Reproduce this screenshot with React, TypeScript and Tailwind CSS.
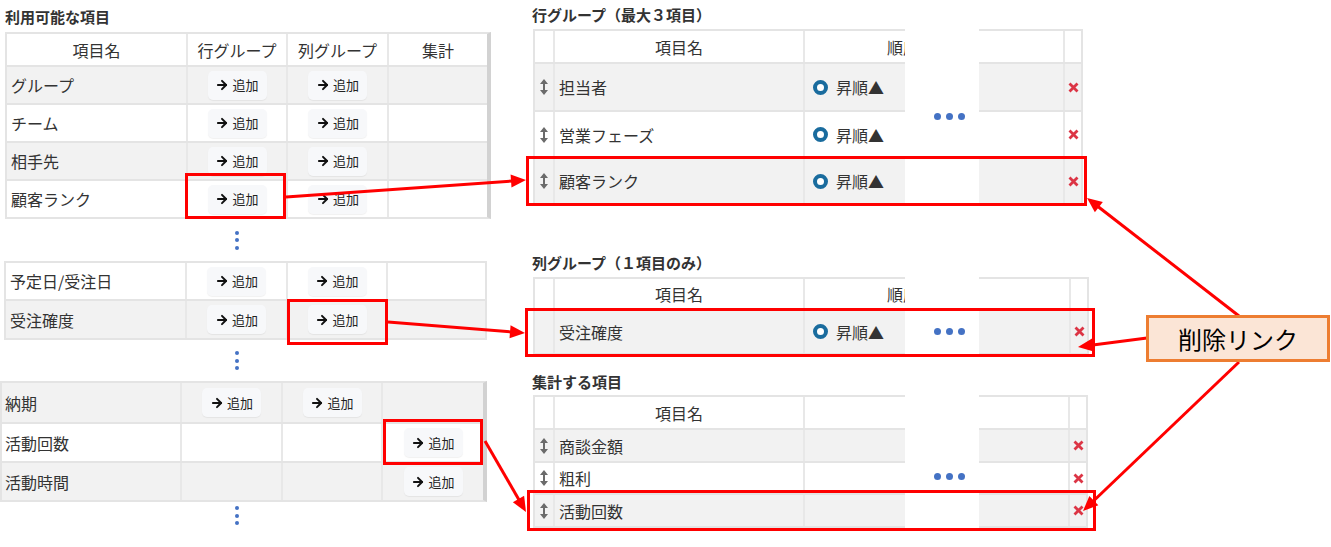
import { ArrowRight } from 'lucide-react';

type LeftRow = { name: string; cells: [boolean, boolean, boolean]; grey: boolean };
type RightRow = { name: string; grey: boolean };

const table1: LeftRow[] = [
  { name: 'グループ', cells: [true, true, false], grey: true },
  { name: 'チーム', cells: [true, true, false], grey: false },
  { name: '相手先', cells: [true, true, false], grey: true },
  { name: '顧客ランク', cells: [true, true, false], grey: false },
];

const table2: LeftRow[] = [
  { name: '予定日/受注日', cells: [true, true, false], grey: false },
  { name: '受注確度', cells: [true, true, false], grey: true },
];

const table3: LeftRow[] = [
  { name: '納期', cells: [true, true, false], grey: true },
  { name: '活動回数', cells: [false, false, true], grey: false },
  { name: '活動時間', cells: [false, false, true], grey: true },
];

function AddButton() {
  return (
    <span className="inline-flex items-center justify-center gap-[3px] w-[59px] h-[29px] rounded-[5px] bg-[#f7f8fa] text-[13px] text-[#222] shadow-[0_1px_1px_rgba(0,0,0,0.06)]">
      <ArrowRight size={14} strokeWidth={3.4} color="#111" />
      追加
    </span>
  );
}

function VDots({ h }: { h: string }) {
  return (
    <div className={`${h} flex items-center pl-[235px]`}>
      <div className="flex flex-col gap-[3.5px]">
        <span className="w-[4px] h-[4px] rounded-full bg-[#4472c4]" />
        <span className="w-[4px] h-[4px] rounded-full bg-[#4472c4]" />
        <span className="w-[4px] h-[4px] rounded-full bg-[#4472c4]" />
      </div>
    </div>
  );
}

function LeftTable({
  rows,
  gridCols,
  className,
  header,
  heights,
  textPad,
}: {
  rows: LeftRow[];
  gridCols: string;
  className: string;
  header: boolean;
  heights: string[];
  textPad: string;
}) {
  return (
    <div className={`border-2 border-[#e4e4e4] ${className}`}>
      {header && (
        <div className={`grid ${gridCols} h-[31px] bg-white`}>
          {['項目名', '行グループ', '列グループ', '集計'].map((h, i) => (
            <div
              key={h}
              className={`flex items-center justify-center ${i ? 'border-l-2 border-[#e8e8e8]' : ''}`}
            >
              {h}
            </div>
          ))}
        </div>
      )}
      {rows.map((r, i) => (
        <div
          key={r.name}
          className={`grid ${gridCols} ${heights[i]} ${r.grey ? 'bg-[#f2f2f2]' : 'bg-white'} ${
            i > 0 || header ? 'border-t-2 border-[#e4e4e4]' : ''
          }`}
        >
          <div className={`flex items-center ${textPad}`}>{r.name}</div>
          {r.cells.map((c, j) => (
            <div key={j} className="flex items-center justify-center border-l-2 border-[#e8e8e8]">
              {c && <AddButton />}
            </div>
          ))}
        </div>
      ))}
    </div>
  );
}

function DragIcon() {
  return (
    <svg width="8" height="16" viewBox="0 0 8 16" fill="#6b6b6b">
      <path d="M4 0 L8 5 H5 V11 H8 L4 16 L0 11 H3 V5 H0 Z" />
    </svg>
  );
}

function DeleteIcon() {
  return (
    <svg width="11" height="11" viewBox="0 0 11 11">
      <path d="M1.5 1.5 L9.5 9.5 M9.5 1.5 L1.5 9.5" stroke="#dc3545" strokeWidth="2.8" />
    </svg>
  );
}

function Order() {
  return (
    <div className="flex items-center gap-[8px] pl-[8px]">
      <span className="w-[15px] h-[15px] rounded-full border-[4px] border-[#1a6c9e] bg-white" />
      <span>昇順▲</span>
    </div>
  );
}

function RightTable({
  gridCols,
  headerH,
  rows,
  heights,
  order,
  drag,
  dotsPad,
}: {
  gridCols: string;
  headerH: string;
  rows: RightRow[];
  heights: string[];
  order: boolean;
  drag: boolean;
  dotsPad: string;
}) {
  return (
    <div className="relative w-fit">
      <div className="border-2 border-[#e4e4e4]">
        <div className={`grid ${gridCols} ${headerH} bg-white`}>
          <div />
          <div className="flex items-center justify-center border-l-2 border-[#e8e8e8]">項目名</div>
          <div className="flex items-center pl-[82px] border-l-2 border-[#e8e8e8]">{order ? '順序' : ''}</div>
          <div className="border-l-2 border-[#e8e8e8]" />
        </div>
        {rows.map((r, i) => (
          <div
            key={r.name}
            className={`grid ${gridCols} ${heights[i]} border-t-2 border-[#e4e4e4] ${r.grey ? 'bg-[#f2f2f2]' : 'bg-white'}`}
          >
            <div className="flex items-center justify-center">{drag && <DragIcon />}</div>
            <div className="flex items-center pl-[4px] border-l-2 border-[#e8e8e8]">{r.name}</div>
            <div className="flex items-center border-l-2 border-[#e8e8e8]">{order && <Order />}</div>
            <div className="flex items-center justify-center border-l-2 border-[#e8e8e8]">
              <DeleteIcon />
            </div>
          </div>
        ))}
      </div>
      {/* omitted part of the table */}
      <div className={`absolute top-[-2px] bottom-[-2px] left-[372px] w-[74px] bg-white pl-[29px] ${dotsPad}`}>
        <div className="flex gap-[5px]">
          <span className="w-[7px] h-[7px] rounded-full bg-[#4472c4]" />
          <span className="w-[7px] h-[7px] rounded-full bg-[#4472c4]" />
          <span className="w-[7px] h-[7px] rounded-full bg-[#4472c4]" />
        </div>
      </div>
    </div>
  );
}

function arrow(x1: number, y1: number, x2: number, y2: number) {
  const dx = x2 - x1;
  const dy = y2 - y1;
  const l = Math.hypot(dx, dy);
  const ux = dx / l;
  const uy = dy / l;
  const len = 15;
  const w = 6.5;
  const bx = x2 - ux * len;
  const by = y2 - uy * len;
  return {
    line: { x1, y1, x2: bx + ux * 2, y2: by + uy * 2 },
    head: `${x2},${y2} ${bx - uy * w},${by + ux * w} ${bx + uy * w},${by - ux * w}`,
  };
}

const arrows = [
  arrow(286, 197, 526, 180),
  arrow(388, 322, 525, 333),
  arrow(485, 441, 526, 512),
  arrow(1239, 316, 1087, 198),
  arrow(1147, 338, 1078, 347),
  arrow(1239, 362, 1083, 511),
];

const boxes = [
  { x: 186.5, y: 174.5, w: 98, h: 43 },
  { x: 288.5, y: 300.5, w: 98, h: 43 },
  { x: 384.5, y: 420.5, w: 97, h: 43 },
  { x: 527.5, y: 157.5, w: 558, h: 47 },
  { x: 526.5, y: 309.5, w: 567, h: 46 },
  { x: 528.5, y: 491.5, w: 566, h: 38 },
];

export default function App() {
  return (
    <div className="relative w-[1331px] h-[547px] overflow-hidden bg-white flex font-['Noto_Sans_CJK_JP','Noto_Sans',sans-serif] text-[16px] text-[#333]">
      <div className="w-[500px] shrink-0 flex flex-col">
        <div className="h-[32px] pt-[7px] pl-[5px] text-[15px] leading-[20px] font-bold text-[#333]">利用可能な項目</div>
        <LeftTable
          rows={table1}
          gridCols="grid-cols-[179px_100px_101px_100px]"
          className="ml-[5px] w-fit border-r-[4px] border-r-[#d2d2d2]"
          header
          heights={['h-[38px]', 'h-[38px]', 'h-[38px]', 'h-[38px]']}
          textPad="pl-[4px]"
        />
        <VDots h="h-[42px]" />
        <LeftTable
          rows={table2}
          gridCols="grid-cols-[179px_101px_100px_99px]"
          className="ml-[4px] w-fit"
          header={false}
          heights={['h-[36px]', 'h-[39px]']}
          textPad="pl-[4px]"
        />
        <VDots h="h-[41px]" />
        <LeftTable
          rows={table3}
          gridCols="grid-cols-[178px_101px_100px_102px]"
          className="w-fit border-r-[4px] border-r-[#d2d2d2]"
          header={false}
          heights={['h-[39px]', 'h-[39px]', 'h-[39px]']}
          textPad="pl-[3px]"
        />
        <VDots h="h-[27px]" />
      </div>

      <div className="flex flex-col pl-[33px]">
        <div className="h-[29px] pt-[5px] -ml-[1px] text-[15px] leading-[20px] font-bold text-[#333]">行グループ（最大３項目）</div>
        <RightTable
          gridCols="grid-cols-[18px_250px_260px_18px]"
          headerH="h-[31px]"
          rows={[
            { name: '担当者', grey: true },
            { name: '営業フェーズ', grey: false },
            { name: '顧客ランク', grey: true },
          ]}
          heights={['h-[48px]', 'h-[47px]', 'h-[46px]']}
          order
          drag
          dotsPad="pt-[86px]"
        />
        <div className="h-[72px] flex items-end pb-[4px] -ml-[1px] text-[15px] leading-[20px] font-bold text-[#333]">列グループ（１項目のみ）</div>
        <RightTable
          gridCols="grid-cols-[18px_250px_266px_18px]"
          headerH="h-[29px]"
          rows={[{ name: '受注確度', grey: true }]}
          heights={['h-[45px]']}
          order
          drag={false}
          dotsPad="pt-[53px]"
        />
        <div className="h-[40px] flex items-end pb-[3px] -ml-[1px] text-[15px] leading-[20px] font-bold text-[#333]">集計する項目</div>
        <RightTable
          gridCols="grid-cols-[18px_250px_265px_18px]"
          headerH="h-[31px]"
          rows={[
            { name: '商談金額', grey: true },
            { name: '粗利', grey: false },
            { name: '活動回数', grey: true },
          ]}
          heights={['h-[33px]', 'h-[32px]', 'h-[33px]']}
          order={false}
          drag
          dotsPad="pt-[80px]"
        />
      </div>

      {/* annotations */}
      <svg className="absolute inset-0 pointer-events-none" width="1331" height="547">
        {boxes.map((b, i) => (
          <rect key={i} x={b.x} y={b.y} width={b.w} height={b.h} fill="none" stroke="#ff0000" strokeWidth="3" />
        ))}
        {arrows.map((a, i) => (
          <g key={i}>
            <line {...a.line} stroke="#ff0000" strokeWidth="3" />
            <polygon points={a.head} fill="#ff0000" />
          </g>
        ))}
      </svg>
      <div className="absolute left-[1146px] top-[315px] w-[184px] h-[47px] border-[3px] border-[#ed7d31] bg-[#fbe5d6] flex items-center justify-center text-[24px] text-black">
        削除リンク
      </div>
    </div>
  );
}
